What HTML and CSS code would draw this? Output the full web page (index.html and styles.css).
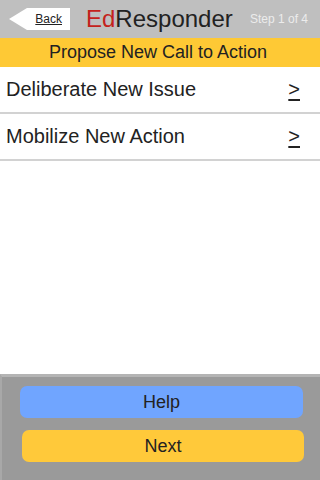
FILE: index.html
```html
<!DOCTYPE html>
<html lang="en">
<head>
    <meta charset="UTF-8">
    <meta name="viewport" content="width=device-width, initial-scale=1.0">
    <title>EdResponder</title>
    <link rel="stylesheet" href="styles.css">
</head>
<body>
    <div class="app">
        <div class="header">
            <a class="back" href="#"><span>Back</span></a>
            <div class="title"><span class="ed">Ed</span>Responder</div>
            <div class="step">Step 1 of 4</div>
        </div>

        <div class="banner">Propose New Call to Action</div>

        <div class="list">
            <div class="row">
                <span class="label">Deliberate New Issue</span>
                <span class="go">&gt;</span>
            </div>
            <div class="row">
                <span class="label">Mobilize New Action</span>
                <span class="go">&gt;</span>
            </div>
        </div>

        <div class="footer">
            <button class="btn help">Help</button>
            <button class="btn next">Next</button>
        </div>
    </div>
</body>
</html>
```

FILE: styles.css
```css
body {
    margin: 0;
    font-family: 'Liberation Sans', Arial, sans-serif;
    color: #222;
    background: #fff;
}

.app {
    display: flex;
    flex-direction: column;
    height: 480px;
}

.header {
    display: flex;
    align-items: center;
    height: 38px;
    background: #bfbfbf;
}

.back {
    display: flex;
    align-items: center;
    justify-content: flex-end;
    width: 61px;
    height: 22px;
    margin-left: 9px;
    padding-right: 8px;
    box-sizing: border-box;
    background: #fff;
    clip-path: polygon(0 50%, 18px 0, 100% 0, 100% 100%, 18px 100%);
    color: #222;
    font-size: 12px;
    text-decoration: underline;
}

.title {
    margin-left: 16px;
    font-size: 24px;
    color: #222;
}

.title .ed {
    color: #c4221c;
}

.step {
    margin-left: auto;
    margin-right: 12px;
    font-size: 12px;
    color: #ececec;
}

.banner {
    height: 29px;
    line-height: 29px;
    background: #fec935;
    text-align: center;
    font-size: 18px;
    color: #222;
    padding-right: 4px;
}

.list {
    flex: 1;
}

.row {
    display: flex;
    align-items: center;
    justify-content: space-between;
    height: 45px;
    padding: 0 20px 0 6px;
    border-bottom: 2px solid #d2d2d2;
    font-size: 20px;
    color: #222;
}

.go {
    text-decoration: underline;
    text-underline-offset: 3px;
}

.footer {
    display: flex;
    flex-direction: column;
    gap: 12px;
    height: 106px;
    padding-top: 9px;
    box-sizing: border-box;
    background: #9a9a9a;
    border-top: 3px solid #b4b4b4;
    border-left: 2px solid #a8a8a8;
}

.btn {
    height: 32px;
    border: none;
    border-radius: 7px;
    font-family: inherit;
    font-size: 18px;
    color: #222;
}

.help {
    margin: 0 17px 0 18px;
    background: #70a5ff;
}

.next {
    margin: 0 16px 0 20px;
    background: #ffc93a;
}
```
